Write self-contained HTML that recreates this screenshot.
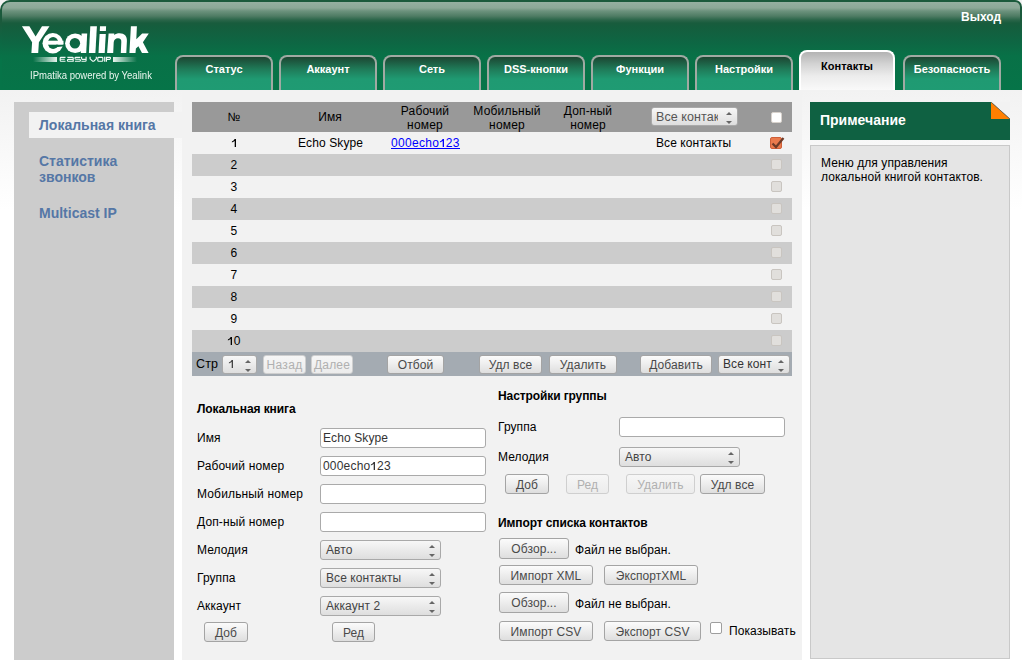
<!DOCTYPE html>
<html><head><meta charset="utf-8">
<style>
*{margin:0;padding:0;box-sizing:border-box}
html,body{width:1022px;height:661px;overflow:hidden;font-family:"Liberation Sans",sans-serif;color:#000}
body{background:linear-gradient(#f2f2f2 90px,#fff 210px);position:relative}
.a{position:absolute;white-space:nowrap}
/* header */
#hdr{left:0;top:0;width:1022px;height:90px;background:linear-gradient(#1b5a3c 0,#1b5a3c 22px,#0e6643 40px,#067448 60px);border-radius:10px 7px 0 0}
#hin{left:2px;top:2px;width:1018px;height:88px;border-radius:8px 5px 0 0;background:linear-gradient(#95b0a1 0px,#8ba897 6px,#6c927d 9px,#4f7c64 14px,#2a6549 18px,#195c3d 21px,#155d3d 24px,#0e6643 40px,#087147 54px,#067448 88px)}
.tab{top:55px;width:98px;height:35px;border:2px solid #a0aaa3;border-bottom:none;border-radius:8px 8px 0 0;background:linear-gradient(#1c4632 0px,#1f7a58 12px,#1f9a72 22px,#1f9b73 35px);color:#fff;font-weight:bold;font-size:11px;text-align:center;padding-top:6px}
.tab.act{top:50px;width:96px;height:40px;border-color:#fff;background:linear-gradient(#b3b3b3 0,#d3d3d3 12px,#ececec 24px,#f9f9f9 38px);color:#000;padding-top:8px}
/* sidebar */
#side{left:14px;top:102px;width:160px;height:558px;background:#cccccc}
.sl{left:39px;font-size:14px;font-weight:bold;color:#5577a6}
/* table */
.row{left:192px;width:600px;height:22px}
.th{font-size:12px;text-align:center}
.td{font-size:12px}
.cb{width:11px;height:11px;border-radius:2px}
.btn{height:20px;border:1px solid #a4a4a4;border-radius:3px;background:linear-gradient(#fbfbfb,#f0f0f0 40%,#dedede);font-size:12px;color:#4a4a4a;text-align:center;line-height:18px;padding-top:1px}
.btn.dis{color:#b0b0b0;border-color:#cfcfcf;background:linear-gradient(#f6f6f6,#ececec)}
.sel{height:20px;border:1px solid #a9a9a9;border-radius:3px;background:linear-gradient(#f7f7f7,#dedede);font-size:12px;color:#444;line-height:18px;padding-left:5px}
.sel:after{content:"";position:absolute;right:5px;top:4px;width:0;height:0;border-left:3px solid transparent;border-right:3px solid transparent;border-bottom:3px solid #666}
.sel:before{content:"";position:absolute;right:5px;top:13px;width:0;height:0;border-left:3px solid transparent;border-right:3px solid transparent;border-top:3px solid #666}
.inp{height:20px;border:1px solid #aaa;border-radius:3px;background:#fff;font-size:12px;color:#333;line-height:18px;padding-left:2px}
.lbl{font-size:12px;left:197px}
</style></head><body>
<div id="hdr" class="a"></div>
<div id="hin" class="a"></div>
<div class="a" style="left:961px;top:10px;font-size:12px;font-weight:bold;color:#fff">Выход</div>
<div class="a tab" style="left:175px">Статус</div>
<div class="a tab" style="left:279px">Аккаунт</div>
<div class="a tab" style="left:383px">Сеть</div>
<div class="a tab" style="left:487px">DSS-кнопки</div>
<div class="a tab" style="left:591px">Функции</div>
<div class="a tab" style="left:695px">Настройки</div>
<div class="a tab act" style="left:799px">Контакты</div>
<div class="a tab" style="left:903px">Безопасность</div>


<!-- logo -->
<svg class="a" style="left:18px;top:22px" width="136" height="34" viewBox="18 22 136 34">
<defs><mask id="lm" maskUnits="userSpaceOnUse" x="18" y="22" width="136" height="34">
<rect x="18" y="22" width="136" height="34" fill="#000"></rect>
<polygon points="21.9,26.2 29.4,26.2 35.6,36.4 42,26.2 49.5,26.2 38.9,42.2 38.2,53 31.4,53 32.1,42.2" fill="#fff"></polygon>
<ellipse cx="52.8" cy="43.25" rx="10.3" ry="10.2" fill="#fff"></ellipse>
<ellipse cx="53.1" cy="43.1" rx="5.3" ry="6.0" fill="#000"></ellipse>
<rect x="45" y="40.7" width="18.5" height="4.0" fill="#fff"></rect>
<polygon points="56,44.7 64,44.7 64,46.3 56,47.2" fill="#000"></polygon>
<ellipse cx="75.2" cy="43.2" rx="10.1" ry="9.8" fill="#fff"></ellipse>
<polygon points="81.6,33.4 87.2,33.4 86.2,53 80.8,53" fill="#fff"></polygon>
<ellipse cx="74.9" cy="43.3" rx="5.2" ry="5.3" fill="#000"></ellipse>
<polygon points="90.3,26.2 96.9,26.2 95.4,53 88.9,53" fill="#fff"></polygon>
<polygon points="100,26.2 106.1,26.2 105.9,31 99.8,31" fill="#fff"></polygon>
<polygon points="99.6,33.9 105.8,33.9 104.7,53 98.5,53" fill="#fff"></polygon>
<path d="M107.1,53 L108.6,33.4 L114.3,33.4 L114.2,35 C115.5,33.8 117.5,33.2 119.5,33.2 C124.5,33.2 127.2,36 126.9,41 L126.3,53 L120.8,53 L121.3,42 C121.5,39.5 120.3,38.3 118,38.3 C115.5,38.3 113.8,40 113.7,42.5 L113.2,53 Z" fill="#fff"></path>
<polygon points="130.9,26.2 136.9,26.2 136.3,39.2 142.2,33.4 148.8,33.4 142.9,42.3 148.6,53 142,53 138.4,46.3 135.9,48.6 135.5,53 129.4,53" fill="#fff"></polygon>
</mask></defs>
<rect x="18" y="22" width="136" height="34" fill="#fff" mask="url(#lm)"></rect>
</svg>
<div class="a" style="left:33px;top:57px;width:24px;height:5px;background:linear-gradient(90deg,rgba(255,255,255,0),#e8f4ee)"></div>
<div class="a" style="left:113px;top:57px;width:24px;height:5px;background:linear-gradient(90deg,#e8f4ee,rgba(255,255,255,0))"></div>
<svg class="a" style="left:58px;top:55px" width="54" height="8" viewBox="58 55 54 8"><path fill="none" stroke="#f4fbf7" stroke-width="1.15" d="M65.5,57.3 H61 Q60.2,57.3 60.2,58.1 V60.4 Q60.2,61.2 61,61.2 H65.5 M60.2,59.25 H64.8 M67.4,57.3 H72.4 Q73.2,57.3 73.2,58.1 V61.2 H68.2 Q67.4,61.2 67.4,60.4 Q67.4,59.4 68.2,59.4 H73.2 M80.4,57.3 H75.8 Q75,57.3 75,58.1 Q75,59.25 75.8,59.25 H79.6 Q80.4,59.25 80.4,60.2 Q80.4,61.2 79.6,61.2 H74.9 M81.6,56.8 V58.4 Q81.6,59.3 82.4,59.3 H86.1 M86.1,56.8 V60.4 Q86.1,61.2 85.3,61.2 H81.4 M90.1,56.8 V58.8 L92.6,61.2 H93.8 L96.3,58.8 V56.8 M97.8,58.1 Q97.8,57.3 98.6,57.3 H102 Q102.8,57.3 102.8,58.1 V60.4 Q102.8,61.2 102,61.2 H98.6 Q97.8,61.2 97.8,60.4 Z M104.7,56.8 V61.7 M106.4,61.7 V57.3 H109.7 Q110.5,57.3 110.5,58.1 Q110.5,59.3 109.7,59.3 H106.4"></path></svg>
<div class="a" style="left:30px;top:69px;font-size:11px;color:#eaf7ef;transform:scaleX(0.867);transform-origin:0 0">IPmatika powered by Yealink</div>

<!-- content panel -->
<div class="a" style="left:182px;top:90px;width:620px;height:570px;background:#f2f2f2"></div>
<div id="side" class="a"></div>
<div class="a" style="left:29px;top:112px;width:153px;height:26px;background:#f2f2f2"></div>
<div class="a sl" style="top:117px">Локальная книга</div>
<div class="a sl" style="top:153px;line-height:16px;white-space:normal;width:100px">Статистика звонков</div>
<div class="a sl" style="top:205px">Multicast IP</div>

<!-- table -->
<div class="a row" style="top:102px;height:30px;background:#999"></div>
<div class="a row" style="top:132px;background:#f2f2f2"></div>
<div class="a row" style="top:154px;background:#ccc"></div>
<div class="a row" style="top:176px;background:#f2f2f2"></div>
<div class="a row" style="top:198px;background:#ccc"></div>
<div class="a row" style="top:220px;background:#f2f2f2"></div>
<div class="a row" style="top:242px;background:#ccc"></div>
<div class="a row" style="top:264px;background:#f2f2f2"></div>
<div class="a row" style="top:286px;background:#ccc"></div>
<div class="a row" style="top:308px;background:#f2f2f2"></div>
<div class="a row" style="top:330px;background:#ccc"></div>
<div class="a row" style="top:352px;height:24px;background:#a4abb2"></div>


<!-- table header text -->
<div class="a th" style="left: 209px; top: 110px; width: 50px; letter-spacing: 0.13px;">№</div>
<div class="a th" style="left: 290px; top: 110px; width: 80px; letter-spacing: 0.08px;">Имя</div>
<div class="a th" style="left: 385px; top: 104px; width: 80px; line-height: 14px; letter-spacing: 0.18px;">Рабочий<br>номер</div>
<div class="a th" style="left: 467px; top: 104px; width: 80px; line-height: 14px; letter-spacing: 0.19px;">Мобильный<br>номер</div>
<div class="a th" style="left: 548px; top: 104px; width: 80px; line-height: 14px; letter-spacing: 0.15px;">Доп-ный<br>номер</div>
<div class="a sel" style="left:651px;top:107px;width:87px;height:19px;line-height:18px;color:#555;padding-left:4px;font-size:12.5px;overflow:hidden"><span style="display: inline-block; width: 62px; overflow: hidden; vertical-align: top; letter-spacing: 0.08px;">Все контакты</span></div>
<div class="a cb" style="left:771px;top:112px;width:11px;height:11px;background:#fff;border:1px solid #d8d2cc"></div>
<!-- row 1 -->
<div class="a td" style="left:209px;top:132px;width:50px;text-align:center;line-height:22px"><svg width="6.67" height="8.2" viewBox="0 0 6.67 8.2" style="vertical-align:baseline"><path d="M3.7 0 H5.0 V8.2 H3.7 V2.1 Q2.6 3.1 0.9 3.6 V2.5 Q2.8 1.7 3.7 0 Z" fill="currentColor"></path></svg></div>
<div class="a td" style="left: 298px; top: 132px; line-height: 22px; letter-spacing: 0.1px;">Echo Skype</div>
<div class="a td" style="left:391px;top:132px;line-height:22px;color:#00f;letter-spacing:0.3px">000echo<svg width="6.67" height="8.2" viewBox="0 0 6.67 8.2" style="vertical-align:baseline"><path d="M3.7 0 H5.0 V8.2 H3.7 V2.1 Q2.6 3.1 0.9 3.6 V2.5 Q2.8 1.7 3.7 0 Z" fill="currentColor"></path></svg>23</div><div class="a" style="left:391px;top:148px;width:69px;height:1px;background:#00f"></div>
<div class="a td" style="left: 656px; top: 132px; line-height: 22px; letter-spacing: 0.08px;">Все контакты</div>
<div class="a cb" style="left:770px;top:137px;width:12px;height:12px;background:#ea7a4c;border:1px solid #cf5f38"></div><svg class="a" style="left:770px;top:136px" width="16" height="14"><path d="M2.5 7.5 L6 11 L13.5 2" fill="none" stroke="#6e3b28" stroke-width="2.2"></path></svg>
<div class="a td" style="left: 209px; top: 154px; width: 50px; text-align: center; line-height: 22px; letter-spacing: 0.33px;">2</div>
<div class="a cb" style="left:771px;top:159px;width:11px;height:11px;background:#e1dfdc;border:1px solid #c9c5c0"></div>
<div class="a td" style="left: 209px; top: 176px; width: 50px; text-align: center; line-height: 22px; letter-spacing: 0.33px;">3</div>
<div class="a cb" style="left:771px;top:181px;width:11px;height:11px;background:#e1dfdc;border:1px solid #c9c5c0"></div>
<div class="a td" style="left: 209px; top: 198px; width: 50px; text-align: center; line-height: 22px; letter-spacing: 0.33px;">4</div>
<div class="a cb" style="left:771px;top:203px;width:11px;height:11px;background:#e1dfdc;border:1px solid #c9c5c0"></div>
<div class="a td" style="left: 209px; top: 220px; width: 50px; text-align: center; line-height: 22px; letter-spacing: 0.33px;">5</div>
<div class="a cb" style="left:771px;top:225px;width:11px;height:11px;background:#e1dfdc;border:1px solid #c9c5c0"></div>
<div class="a td" style="left: 209px; top: 242px; width: 50px; text-align: center; line-height: 22px; letter-spacing: 0.33px;">6</div>
<div class="a cb" style="left:771px;top:247px;width:11px;height:11px;background:#e1dfdc;border:1px solid #c9c5c0"></div>
<div class="a td" style="left: 209px; top: 264px; width: 50px; text-align: center; line-height: 22px; letter-spacing: 0.33px;">7</div>
<div class="a cb" style="left:771px;top:269px;width:11px;height:11px;background:#e1dfdc;border:1px solid #c9c5c0"></div>
<div class="a td" style="left: 209px; top: 286px; width: 50px; text-align: center; line-height: 22px; letter-spacing: 0.33px;">8</div>
<div class="a cb" style="left:771px;top:291px;width:11px;height:11px;background:#e1dfdc;border:1px solid #c9c5c0"></div>
<div class="a td" style="left: 209px; top: 308px; width: 50px; text-align: center; line-height: 22px; letter-spacing: 0.33px;">9</div>
<div class="a cb" style="left:771px;top:313px;width:11px;height:11px;background:#e1dfdc;border:1px solid #c9c5c0"></div>
<div class="a td" style="left: 209px; top: 330px; width: 50px; text-align: center; line-height: 22px; letter-spacing: 0.33px;"><svg width="6.67" height="8.2" viewBox="0 0 6.67 8.2" style="vertical-align:baseline"><path d="M3.7 0 H5.0 V8.2 H3.7 V2.1 Q2.6 3.1 0.9 3.6 V2.5 Q2.8 1.7 3.7 0 Z" fill="currentColor"></path></svg>0</div>
<div class="a cb" style="left:771px;top:335px;width:11px;height:11px;background:#e1dfdc;border:1px solid #c9c5c0"></div>

<!-- footer -->
<div class="a" style="left: 196px; top: 356px; font-size: 12.5px; line-height: 16px; letter-spacing: 0.1px;">Стр</div>
<div class="a sel" style="left:222px;top:355px;width:35px;height:19px;line-height:17px;padding-left:5px"><svg width="6.67" height="8.2" viewBox="0 0 6.67 8.2" style="vertical-align:baseline"><path d="M3.7 0 H5.0 V8.2 H3.7 V2.1 Q2.6 3.1 0.9 3.6 V2.5 Q2.8 1.7 3.7 0 Z" fill="currentColor"></path></svg></div>
<div class="a btn dis" style="left: 263px; top: 355px; width: 43px; height: 19px; line-height: 17px; letter-spacing: 0.3px;">Назад</div>
<div class="a btn dis" style="left: 311px; top: 355px; width: 42px; height: 19px; line-height: 17px; letter-spacing: 0.17px;">Далее</div>
<div class="a btn" style="left: 387px; top: 355px; width: 57px; height: 19px; line-height: 17px; letter-spacing: 0.08px;">Отбой</div>
<div class="a btn" style="left: 479px; top: 355px; width: 63px; height: 19px; line-height: 17px; letter-spacing: 0.08px;">Удл все</div>
<div class="a btn" style="left: 549px; top: 355px; width: 68px; height: 19px; line-height: 17px; letter-spacing: 0.08px;">Удалить</div>
<div class="a btn" style="left: 640px; top: 355px; width: 72px; height: 19px; line-height: 17px; letter-spacing: 0.08px;">Добавить</div>
<div class="a sel" style="left: 718px; top: 355px; width: 72px; height: 19px; line-height: 17px; padding-left: 4px; color: rgb(51, 51, 51); letter-spacing: 0.08px;">Все конт</div>

<!-- left form -->
<div class="a" style="left:197px;top:402px;font-size:12px;font-weight:bold;line-height:14px;letter-spacing:-0.1px">Локальная книга</div>
<div class="a lbl" style="top: 431px; line-height: 14px; letter-spacing: 0.08px;">Имя</div>
<div class="a lbl" style="top: 459px; line-height: 14px; letter-spacing: 0.14px;">Рабочий номер</div>
<div class="a lbl" style="top: 487px; line-height: 14px; letter-spacing: 0.15px;">Мобильный номер</div>
<div class="a lbl" style="top: 515px; line-height: 14px; letter-spacing: 0.12px;">Доп-ный номер</div>
<div class="a lbl" style="top: 543px; line-height: 14px; letter-spacing: 0.08px;">Мелодия</div>
<div class="a lbl" style="top: 571px; line-height: 14px; letter-spacing: 0.08px;">Группа</div>
<div class="a lbl" style="top: 599px; line-height: 14px; letter-spacing: 0.08px;">Аккаунт</div>
<div class="a inp" style="left:320px;top:428px;width:166px;letter-spacing:0.1px">Echo Skype</div>
<div class="a inp" style="left:320px;top:456px;width:166px;letter-spacing:0.2px">000echo<svg width="6.67" height="8.2" viewBox="0 0 6.67 8.2" style="vertical-align:baseline"><path d="M3.7 0 H5.0 V8.2 H3.7 V2.1 Q2.6 3.1 0.9 3.6 V2.5 Q2.8 1.7 3.7 0 Z" fill="currentColor"></path></svg>23</div>
<div class="a inp" style="left:320px;top:484px;width:166px"></div>
<div class="a inp" style="left:320px;top:512px;width:166px"></div>
<div class="a sel" style="left: 320px; top: 540px; width: 121px; letter-spacing: 0.08px;">Авто</div>
<div class="a sel" style="left: 320px; top: 568px; width: 121px; letter-spacing: 0.08px;">Все контакты</div>
<div class="a sel" style="left: 320px; top: 596px; width: 121px; letter-spacing: 0.08px;">Аккаунт 2</div>
<div class="a btn" style="left: 204px; top: 622px; width: 44px; letter-spacing: 0.11px;">Доб</div>
<div class="a btn" style="left: 332px; top: 622px; width: 43px; letter-spacing: 0.11px;">Ред</div>
<!-- right form -->
<div class="a" style="left:498px;top:389px;font-size:12px;font-weight:bold;line-height:14px;letter-spacing:-0.1px">Настройки группы</div>
<div class="a" style="left: 498px; top: 420px; font-size: 12px; line-height: 14px; letter-spacing: 0.08px;">Группа</div>
<div class="a" style="left: 498px; top: 450px; font-size: 12px; line-height: 14px; letter-spacing: 0.08px;">Мелодия</div>
<div class="a inp" style="left:619px;top:417px;width:166px"></div>
<div class="a sel" style="left: 619px; top: 447px; width: 121px; letter-spacing: 0.08px;">Авто</div>
<div class="a btn" style="left: 505px; top: 474px; width: 44px; letter-spacing: 0.11px;">Доб</div>
<div class="a btn dis" style="left: 566px; top: 474px; width: 43px; letter-spacing: 0.11px;">Ред</div>
<div class="a btn dis" style="left: 626px; top: 474px; width: 69px; letter-spacing: 0.08px;">Удалить</div>
<div class="a btn" style="left: 700px; top: 474px; width: 65px; letter-spacing: 0.08px;">Удл все</div>
<div class="a" style="left:498px;top:516px;font-size:12px;font-weight:bold;line-height:14px;letter-spacing:-0.1px">Импорт списка контактов</div>
<div class="a btn" style="left: 499px; top: 538px; width: 70px; height: 21px; line-height: 19px; letter-spacing: 0.08px;">Обзор...</div>
<div class="a" style="left: 575px; top: 543px; font-size: 12px; line-height: 14px; letter-spacing: 0.09px;">Файл не выбран.</div>
<div class="a btn" style="left: 499px; top: 565px; width: 94px; letter-spacing: 0.08px;">Импорт XML</div>
<div class="a btn" style="left: 604px; top: 565px; width: 94px; letter-spacing: 0.08px;">ЭкспортXML</div>
<div class="a btn" style="left: 499px; top: 592px; width: 70px; height: 21px; line-height: 19px; letter-spacing: 0.08px;">Обзор...</div>
<div class="a" style="left: 575px; top: 597px; font-size: 12px; line-height: 14px; letter-spacing: 0.09px;">Файл не выбран.</div>
<div class="a btn" style="left: 499px; top: 621px; width: 94px; letter-spacing: 0.08px;">Импорт CSV</div>
<div class="a btn" style="left: 604px; top: 621px; width: 97px; letter-spacing: 0.08px;">Экспорт CSV</div>
<div class="a" style="left:710px;top:622px;width:12px;height:12px;border:1px solid #9e9e9e;border-radius:2px;background:#fff"></div>
<div class="a" style="left: 729px; top: 624px; font-size: 12px; line-height: 14px; letter-spacing: 0.09px;">Показывать</div>

<!-- notes -->
<div class="a" style="left:810px;top:102px;width:200px;height:38px;background:#0f6142"></div>
<svg class="a" style="left:991px;top:102px" width="19" height="17"><polygon points="0,0 19,0 19,17" fill="#f2f2f2"></polygon><polygon points="0,0 19,17 0,17" fill="#ff7f00"></polygon><line x1="0.3" y1="0.3" x2="19" y2="17" stroke="#555" stroke-width="0.9" stroke-opacity="0.8"></line></svg>
<div class="a" style="left:820px;top:112px;font-size:14px;font-weight:bold;color:#fff">Примечание</div>
<div class="a" style="left:810px;top:145px;width:200px;height:514px;background:#e5e5e5;border:1px solid #c9c9c9"></div>
<div class="a" style="left: 821px; top: 156px; font-size: 12px; line-height: 14px; letter-spacing: 0.08px;">Меню для управления<br>локальной книгой контактов.</div>

</body></html>
